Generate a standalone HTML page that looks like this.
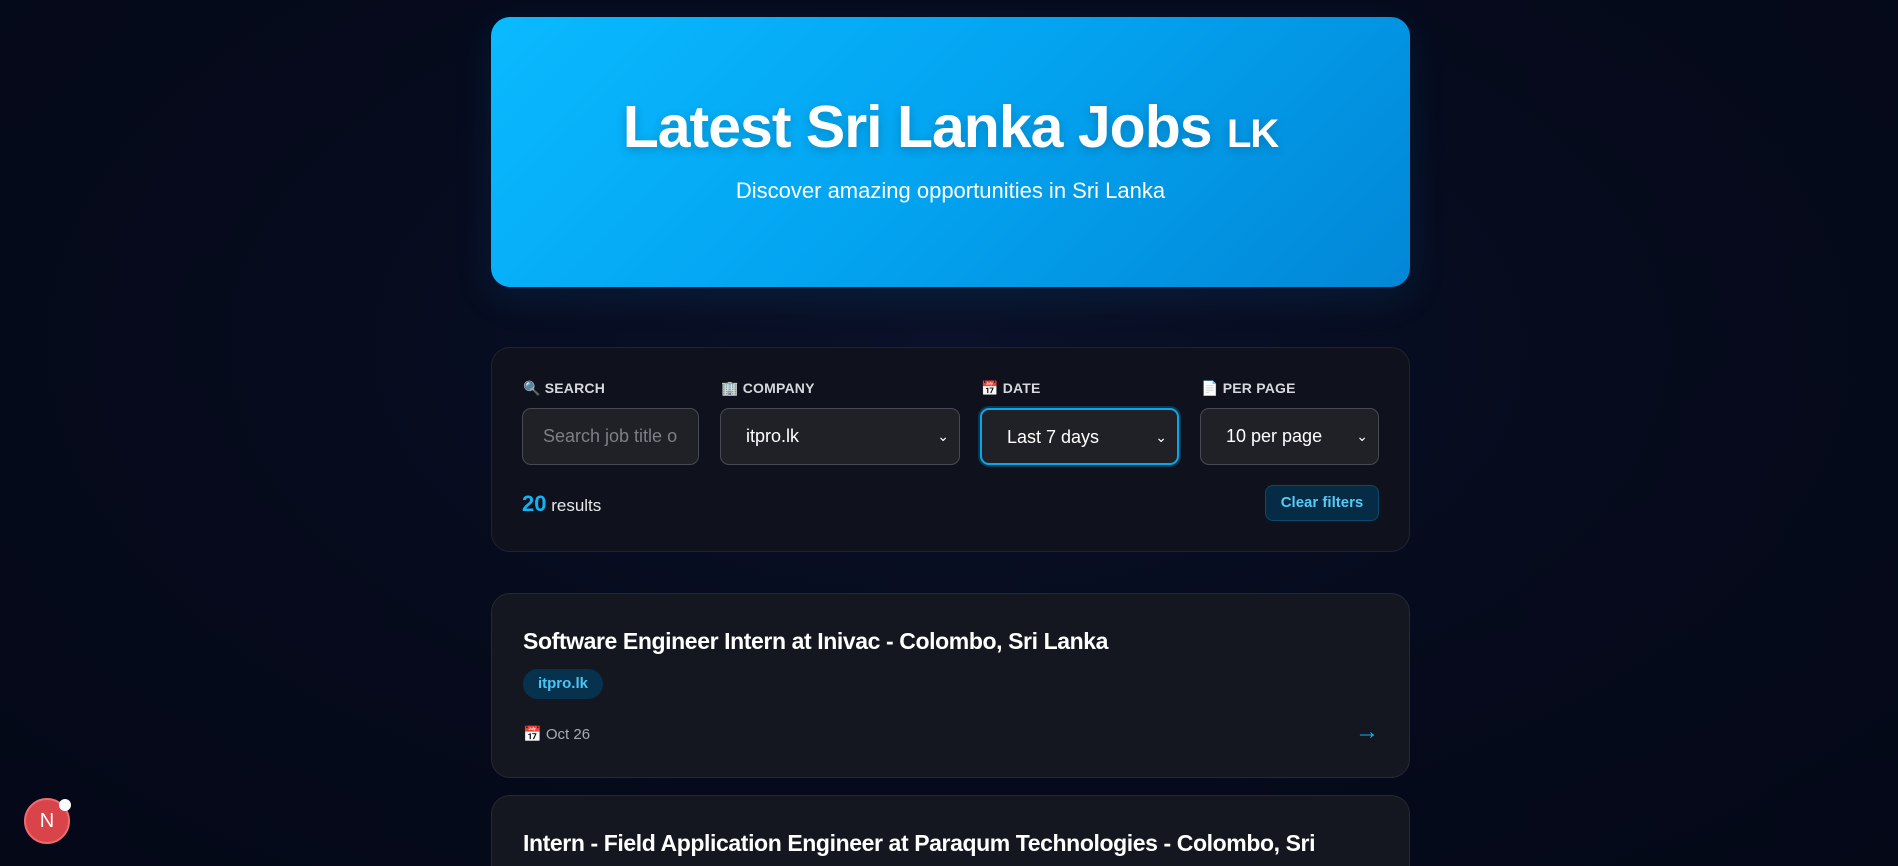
<!DOCTYPE html>
<html><head><meta charset="utf-8"><style>
*{box-sizing:border-box;margin:0;padding:0}
html{width:1898px;height:866px;overflow:hidden}
body{width:1898px;height:866px;overflow:hidden;background:radial-gradient(ellipse at 50% 40%,#0a1128 0%,#060b1d 50%,#040817 100%);font-family:"Liberation Sans",sans-serif;color:#fff;position:relative}
.hero{position:absolute;left:491px;top:17px;width:919px;height:270px;border-radius:19px;background:linear-gradient(135deg,#0abaff 0%,#03a3f0 50%,#0287d6 100%);text-align:center;box-shadow:0 10px 40px rgba(0,140,220,.12)}
.hero h1{position:absolute;top:76px;left:0;right:0;font-size:59px;font-weight:700;letter-spacing:-1px;text-shadow:0 3px 10px rgba(0,0,0,.2)}
.hero h1 span{font-size:40px}
.hero p{position:absolute;top:161px;left:0;right:0;font-size:22px}
.panel{position:absolute;left:491px;top:347px;width:919px;height:205px;border-radius:19px;background:#0f121c;border:1px solid #1f2330}
.lbl{position:absolute;top:380px;font-size:14px;font-weight:700;color:#d6d8de;letter-spacing:.2px}
.inp{position:absolute;top:408px;height:57px;border-radius:9px;background:#202127;border:1px solid #474a52;font-size:18px;padding-left:25px;line-height:55px;color:#fff}
.inp .ch{position:absolute;right:10px;top:0;font-size:14px}
.card{position:absolute;left:491px;width:919px;border-radius:19px;background:#141720;border:1px solid #252935}
h2{position:absolute;left:31px;font-size:23px;font-weight:700;color:#fff;white-space:nowrap;letter-spacing:-0.4px}
</style></head><body>
<div class="hero"><h1>Latest Sri Lanka Jobs <span>LK</span></h1><p>Discover amazing opportunities in Sri Lanka</p></div>
<div class="panel"></div>
<div class="lbl" style="left:523px">🔍 SEARCH</div>
<div class="lbl" style="left:721px">🏢 COMPANY</div>
<div class="lbl" style="left:981px">📅 DATE</div>
<div class="lbl" style="left:1201px">📄 PER PAGE</div>
<div class="inp" style="left:522px;width:177px;color:#7d7f86;padding-left:20px;overflow:hidden;white-space:nowrap">Search job title o</div>
<div class="inp" style="left:720px;width:240px">itpro.lk<span class="ch">⌄</span></div>
<div class="inp" style="left:980px;width:199px;border:2px solid #0aa6e8;box-shadow:0 0 0 2px rgba(10,166,232,.25)">Last 7 days<span class="ch">⌄</span></div>
<div class="inp" style="left:1200px;width:179px">10 per page<span class="ch">⌄</span></div>
<div style="position:absolute;left:522px;top:491px;font-size:17px;color:#e6e7ea"><b style="font-size:22px;color:#12b3f5">20</b> results</div>
<div style="position:absolute;left:1265px;top:485px;width:114px;height:36px;border-radius:8px;background:#062c45;border:1px solid #0b4a6c;color:#58c8f5;font-size:15px;font-weight:700;text-align:center;line-height:34px">Clear filters</div>
<div class="card" style="top:593px;height:185px">
<h2 style="top:34px">Software Engineer Intern at Inivac - Colombo, Sri Lanka</h2>
<div style="position:absolute;left:31px;top:75px;width:80px;height:30px;border-radius:15px;background:#07324d;color:#4cc3f5;font-size:15px;font-weight:700;text-align:center;line-height:30px">itpro.lk</div>
<div style="position:absolute;left:31px;top:131px;font-size:15px;color:#a9abb3">📅 Oct 26</div>
<div style="position:absolute;right:30px;top:124px;font-size:24px;color:#19aef0">→</div>
</div>
<div class="card" style="top:795px;height:71px;border-bottom:none;border-radius:19px 19px 0 0">
<h2 style="top:34px">Intern - Field Application Engineer at Paraqum Technologies - Colombo, Sri</h2>
</div>
<div style="position:absolute;left:24px;top:798px;width:46px;height:46px;border-radius:50%;background:#d9434a;border:2px solid #f06a70;color:#fff;font-size:20px;text-align:center;line-height:42px">N</div>
<div style="position:absolute;left:59px;top:799px;width:12px;height:12px;border-radius:50%;background:#fff"></div>
</body></html>
